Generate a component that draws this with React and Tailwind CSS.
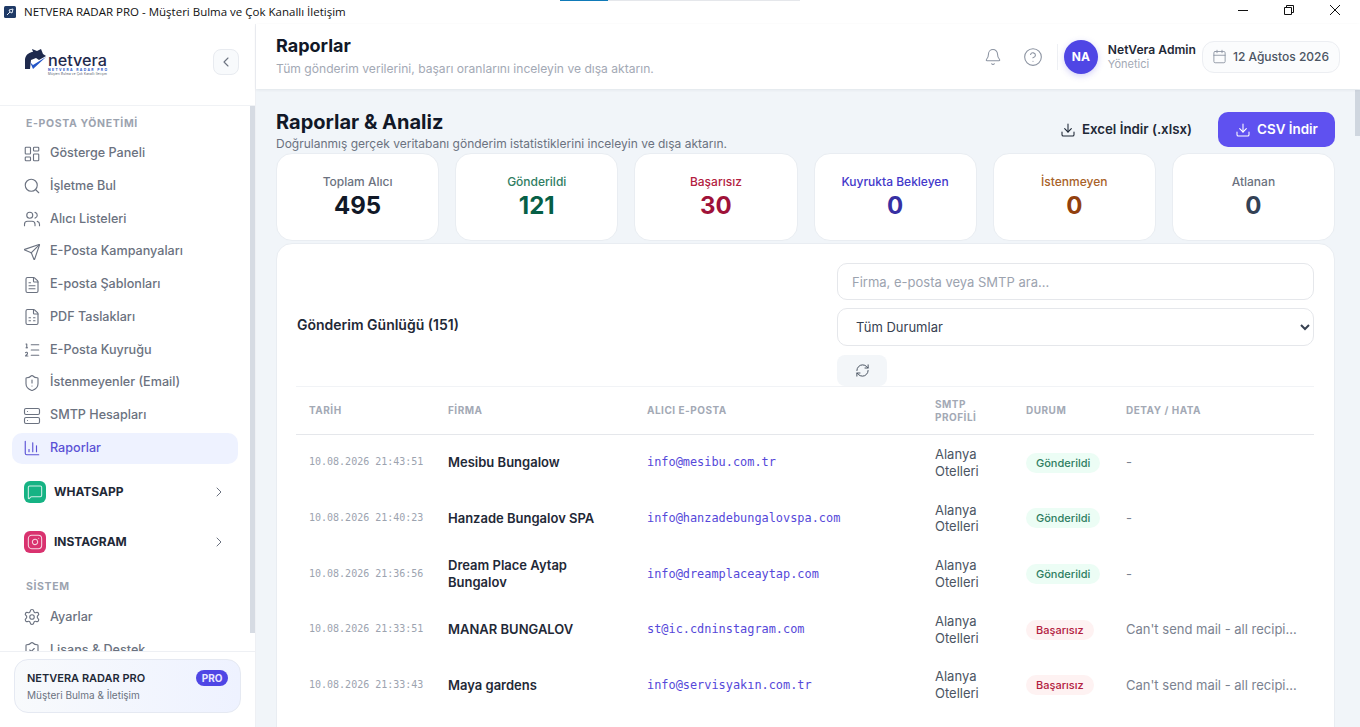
import React from 'react';
import { LayoutDashboard, Search, Users, Send, FileText, FileSpreadsheet, ListOrdered, ShieldAlert, Server, ChartColumn, MessageSquare, Instagram, ChevronRight, ChevronLeft, Settings, ShieldCheck, Bell, CircleHelp, Calendar, Download, RefreshCw } from 'lucide-react';

const nav = [
  [LayoutDashboard, 'Gösterge Paneli'],
  [Search, 'İşletme Bul'],
  [Users, 'Alıcı Listeleri'],
  [Send, 'E-Posta Kampanyaları'],
  [FileText, 'E-posta Şablonları'],
  [FileSpreadsheet, 'PDF Taslakları'],
  [ListOrdered, 'E-Posta Kuyruğu'],
  [ShieldAlert, 'İstenmeyenler (Email)'],
  [Server, 'SMTP Hesapları'],
];

const stats = [
  ['Toplam Alıcı', '495', 'text-[#6b7280]', 'text-[#111827]'],
  ['Gönderildi', '121', 'text-[#2f7d62]', 'text-[#065f46]'],
  ['Başarısız', '30', 'text-[#b3213f]', 'text-[#9f1239]'],
  ['Kuyrukta Bekleyen', '0', 'text-[#4338ca]', 'text-[#3730a3]'],
  ['İstenmeyen', '0', 'text-[#a8622a]', 'text-[#92400e]'],
  ['Atlanan', '0', 'text-[#6b7280]', 'text-[#334155]'],
];

const err = "Can't send mail - all recipi...";
const rows = [
  ['10.08.2026 21:43:51', 'Mesibu Bungalow', 'info@mesibu.com.tr', true, '-'],
  ['10.08.2026 21:40:23', 'Hanzade Bungalov SPA', 'info@hanzadebungalovspa.com', true, '-'],
  ['10.08.2026 21:36:56', 'Dream Place Aytap Bungalov', 'info@dreamplaceaytap.com', true, '-'],
  ['10.08.2026 21:33:51', 'MANAR BUNGALOV', 'st@ic.cdninstagram.com', false, err],
  ['10.08.2026 21:33:43', 'Maya gardens', 'info@servisyakın.com.tr', false, err],
];

function NavItem({ icon: Icon, label, active }) {
  return (
    <div className={`flex h-[31px] items-center gap-[9px] rounded-[10px] pl-[11px] text-[12.6px] font-medium ${active ? 'bg-[#eef2ff] text-[#5b52d6]' : 'text-[#6b7280]'}`}>
      <Icon size={18} strokeWidth={1.5} />
      <span>{label}</span>
    </div>
  );
}

function Group({ icon: Icon, label, bg }) {
  return (
    <div className="flex h-[22px] items-center pl-[12px] pr-[11px]">
      <div className={`flex h-[22px] w-[22px] items-center justify-center rounded-[6px] ${bg}`}>
        <Icon size={16} strokeWidth={1.6} className="text-white opacity-80" />
      </div>
      <span className="ml-2 flex-1 text-[12px] font-bold text-[#1f2937]">{label}</span>
      <ChevronRight size={16} strokeWidth={1.5} className="text-[#6b7280]" />
    </div>
  );
}

function Logo() {
  return (
    <svg width="84" height="28" viewBox="0 0 84 28" className="shrink-0">
      <path d="M1 21 L1 11 C2 6 6 4 9 4 L8 1 L13 3 L17 1 L19 6 L22 8 L15 12 L12 10 L7 12 L6 21 Z" fill="#1f2a4d" />
      <path d="M6 14 L9 21 L22 9 L9 17 Z" fill="#2456c8" />
      <text x="24" y="18" fontFamily="Inter, sans-serif" fontSize="15.5" fontWeight="500" fill="#1f2a4d" textLength="59" lengthAdjust="spacingAndGlyphs">netvera</text>
      <text x="24" y="22.5" fontFamily="Inter, sans-serif" fontSize="3.4" fontWeight="700" fill="#2456c8" textLength="59">NETVERA RADAR PRO</text>
      <text x="24" y="27" fontFamily="Inter, sans-serif" fontSize="3" fill="#4b5563" textLength="59">Müşteri Bulma ve Çok Kanallı İletişim</text>
    </svg>
  );
}

function Sidebar() {
  return (
    <aside className="relative flex w-[256px] shrink-0 flex-col border-r border-[#eef0f4] bg-white">
      <div className="flex h-[82px] shrink-0 items-center justify-between border-b border-[#f0f2f5] pb-[5px] pl-[24px] pr-[16px]">
        <Logo />
        <button className="flex h-[26px] w-[26px] items-center justify-center rounded-[8px] border border-[#e8ebf0] bg-[#f8fafc] text-[#6b7280]">
          <ChevronLeft size={16} strokeWidth={1.6} />
        </button>
      </div>
      <div className="h-[546px] shrink-0 overflow-hidden border-b border-[#eef0f4] pl-[12px] pr-[17px]">
        <div className="pl-[14px] pt-[11px] text-[10.5px] font-bold leading-[13px] tracking-[0.06em] text-[#9ca3af]">E-POSTA YÖNETİMİ</div>
        <div className="mt-[8px] flex flex-col gap-[1.75px]">
          {nav.map(([icon, label]) => <NavItem key={label} icon={icon} label={label} />)}
          <NavItem icon={ChartColumn} label="Raporlar" active />
        </div>
        <div className="mt-[17.5px] flex flex-col gap-[28px]">
          <Group icon={MessageSquare} label="WHATSAPP" bg="bg-[#16b384]" />
          <Group icon={Instagram} label="INSTAGRAM" bg="bg-[#d9326f]" />
        </div>
        <div className="pl-[14px] pt-[26.5px] text-[10.5px] font-bold leading-[13px] tracking-[0.06em] text-[#9ca3af]">SİSTEM</div>
        <div className="mt-[9px] flex flex-col gap-[1.75px]">
          <NavItem icon={Settings} label="Ayarlar" />
          <NavItem icon={ShieldCheck} label="Lisans & Destek" />
        </div>
      </div>
      <div className="px-[14px] pt-[7px]">
        <div className="flex h-[54px] flex-col justify-center gap-[2px] rounded-[14px] border border-[#e5e9f2] bg-gradient-to-r from-[#f8fafc] to-[#eef2ff] pl-[12px] pr-[12px]">
          <div className="flex items-center justify-between">
            <span className="text-[11px] font-semibold text-[#1f2937]">NETVERA RADAR PRO</span>
            <span className="rounded-full bg-[#4f46e5] px-[5.5px] text-[10px] font-bold leading-[16px] text-[#e9e8ff]">PRO</span>
          </div>
          <span className="text-[10px] leading-[14px] text-[#6b7280]">Müşteri Bulma & İletişim</span>
        </div>
      </div>
      <div className="absolute left-[250px] top-[82px] h-[527px] w-[5px] bg-[#d6dbe3]" />
    </aside>
  );
}

function Header() {
  return (
    <header className="z-10 flex h-[65px] shrink-0 items-center justify-between bg-white pl-[20px] pr-[20px] shadow-[0_1px_3px_rgba(15,23,42,0.07)]">
      <div className="pb-[1px]">
        <h1 className="text-[18px] font-bold leading-[22px] text-[#111827]">Raporlar</h1>
        <p className="mt-[4px] text-[12.1px] leading-[16px] text-[#a3a9b5]">Tüm gönderim verilerini, başarı oranlarını inceleyin ve dışa aktarın.</p>
      </div>
      <div className="flex items-center">
        <Bell size={18} strokeWidth={1.4} className="text-[#8b93a1]" />
        <CircleHelp size={20} strokeWidth={1.3} className="ml-[21px] text-[#8b93a1]" />
        <div className="ml-[14px] h-[26px] w-px bg-[#eef0f4]" />
        <div className="ml-[6px] flex h-[34px] w-[34px] items-center justify-center rounded-full bg-[#4f46e5] text-[12px] font-bold text-white shadow-[0_2px_6px_rgba(79,70,229,0.25)]">NA</div>
        <div className="ml-[10px] flex flex-col">
          <span className="text-[12.1px] font-semibold leading-[15px] text-[#1f2937]">NetVera Admin</span>
          <span className="text-[11px] leading-[15px] text-[#a3a9b5]">Yönetici</span>
        </div>
        <div className="ml-[6px] flex h-[32px] items-center gap-[6px] rounded-[12px] border border-[#eceef2] bg-[#fbfcfd] pl-[9px] pr-[10px] text-[12px] font-medium text-[#4b5563]">
          <Calendar size={15} strokeWidth={1.4} className="text-[#8b93a1]" />
          <span>12 Ağustos 2026</span>
        </div>
      </div>
    </header>
  );
}

function Stat({ s }) {
  return (
    <div className="flex h-[88px] flex-col items-center rounded-[16px] border border-[#e9edf2] bg-white pt-[19.5px]">
      <span className={`text-[12px] font-medium leading-[15px] ${s[2]}`}>{s[0]}</span>
      <span className={`mt-[2px] text-[24px] font-bold leading-[30px] ${s[3]}`}>{s[1]}</span>
    </div>
  );
}

function Badge({ ok }) {
  return ok
    ? <span className="inline-block rounded-full bg-[#ecfdf5] px-[10px] text-[11px] font-medium leading-[20px] text-[#2f7d62]">Gönderildi</span>
    : <span className="inline-block rounded-full bg-[#fef2f2] px-[10px] text-[11px] font-medium leading-[20px] text-[#b3213f]">Başarısız</span>;
}

const th = 'border-b border-[#e5e7eb] px-[13px] text-left align-middle text-[10px] font-bold uppercase leading-[13px] tracking-[0.05em] text-[#a3a9b5]';
const td = 'px-[13px] py-[11px] align-middle';

function LogTable() {
  return (
    <section className="mt-[2px] rounded-[16px] border border-[#e9edf2] bg-white pl-[19px] pr-[20px] pt-[19px]">
      <div className="flex items-center justify-between pl-px">
        <h2 className="text-[14px] font-semibold text-[#1f2937]">Gönderim Günlüğü (151)</h2>
        <div className="flex w-[477px] flex-col">
          <input readOnly placeholder="Firma, e-posta veya SMTP ara..." className="h-[37px] rounded-[10px] border border-[#e5e7eb] bg-white px-[14px] text-[13px] outline-none placeholder:text-[#9ca3af]" />
          <select className="mt-[8px] h-[38px] rounded-[10px] border border-[#e5e7eb] bg-white px-[14px] text-[13px] text-[#374151] outline-none">
            <option>Tüm Durumlar</option>
          </select>
          <button className="mt-[9px] flex h-[31px] w-[50px] items-center justify-center rounded-[8px] bg-[#f3f6f9] text-[#4b5563]">
            <RefreshCw size={15} strokeWidth={1.6} />
          </button>
        </div>
      </div>
      <table className="w-full table-fixed border-t border-[#f1f3f6]">
        <colgroup>
          <col className="w-[139px]" /><col className="w-[199px]" /><col className="w-[288px]" /><col className="w-[91px]" /><col className="w-[100px]" /><col />
        </colgroup>
        <thead>
          <tr className="h-[48px]">
            <th className={th}>TARİH</th>
            <th className={th}>FİRMA</th>
            <th className={th}>ALICI E-POSTA</th>
            <th className={th}>SMTP PROFİLİ</th>
            <th className={th}>DURUM</th>
            <th className={th}>DETAY / HATA</th>
          </tr>
        </thead>
        <tbody className="leading-[16.8px]">
          {rows.map((r) => (
            <tr key={r[0]}>
              <td className={`${td} whitespace-nowrap font-['DejaVu_Sans_Mono',monospace] text-[10px] text-[#9ca3af]`}>{r[0]}</td>
              <td className={`${td} text-[13px] font-semibold text-[#1f2937]`}>{r[1]}</td>
              <td className={`${td} whitespace-nowrap font-['DejaVu_Sans_Mono',monospace] text-[11.9px] text-[#5548d9]`}>{r[2]}</td>
              <td className={`${td} text-[13px] text-[#4b5563]`}>Alanya Otelleri</td>
              <td className={td}><Badge ok={r[3]} /></td>
              <td className={`${td} whitespace-nowrap text-[13px] text-[#7b8290]`}>{r[4]}</td>
            </tr>
          ))}
          <tr>
            <td className={td} /><td className={td} /><td className={td} />
            <td className={`${td} text-[13px] text-[#4b5563]`}>Alanya Otelleri</td>
            <td className={td} /><td className={td} />
          </tr>
        </tbody>
      </table>
    </section>
  );
}

function Main() {
  return (
    <main className="relative flex min-w-0 flex-1 flex-col">
      <Header />
      <div className="min-h-0 flex-1 overflow-hidden bg-[#f1f5f9] pl-[20px] pr-[25px] pt-[23px]">
        <div className="flex items-start justify-between">
          <div className="-mt-[1px]">
            <h2 className="text-[20px] font-bold leading-[22px] text-[#111827]">Raporlar & Analiz</h2>
            <p className="mt-[3px] text-[12px] leading-[16px] text-[#6b7280]">Doğrulanmış gerçek veritabanı gönderim istatistiklerini inceleyin ve dışa aktarın.</p>
          </div>
          <div className="flex items-center">
            <button className="flex items-center gap-[6px] text-[13.3px] font-semibold text-[#1f2937]">
              <Download size={16} strokeWidth={1.6} />Excel İndir (.xlsx)
            </button>
            <button className="ml-[26px] flex h-[35px] w-[117px] items-center justify-center gap-[6px] rounded-[10px] bg-[#5f51f0] text-[13.4px] font-semibold text-white">
              <Download size={16} strokeWidth={1.6} />CSV İndir
            </button>
          </div>
        </div>
        <div className="mt-[1px] grid grid-cols-6 gap-[16px]">
          {stats.map((s) => <Stat key={s[0]} s={s} />)}
        </div>
        <LogTable />
      </div>
      <div className="absolute right-0 top-[66px] h-[46px] w-[5px] bg-[#cfd6df]" />
    </main>
  );
}

function TitleBar() {
  return (
    <div className="relative flex h-[24px] shrink-0 items-center bg-white pl-[4px]">
      <svg width="12" height="12" viewBox="0 0 12 12">
        <rect width="12" height="12" rx="1.5" fill="#1f3a66" />
        <path d="M3 9 L6 6 L5 4 L9 3 L8 7 L6 6" stroke="#e5edf7" strokeWidth="1" fill="none" />
      </svg>
      <span className="ml-[8px] font-['Open_Sans',sans-serif] text-[11.5px] text-[#111]">NETVERA RADAR PRO - Müşteri Bulma ve Çok Kanallı İletişim</span>
      <div className="absolute left-[560px] top-0 flex h-px">
        <div className="w-[48px] bg-[#0f7ab8]" />
        <div className="w-[192px] bg-[#e5e7eb]" />
      </div>
      <div className="absolute right-[19px] top-[4px] flex gap-[34px]">
        <svg width="12" height="12" viewBox="0 0 12 12"><path d="M1 6.5 H11" stroke="#111" fill="none" /></svg>
        <svg width="12" height="12" viewBox="0 0 12 12"><path d="M1.5 3.5 H8.5 V10.5 H1.5 Z M3.5 3.5 V1.5 H10.5 V8.5 H8.5" stroke="#111" fill="none" /></svg>
        <svg width="12" height="12" viewBox="0 0 12 12"><path d="M1 1 L11 11 M11 1 L1 11" stroke="#111" fill="none" /></svg>
      </div>
    </div>
  );
}

export default function App() {
  return (
    <div className="flex h-screen w-full flex-col overflow-hidden bg-white font-['Inter',sans-serif]">
      <TitleBar />
      <div className="flex min-h-0 flex-1">
        <Sidebar />
        <Main />
      </div>
    </div>
  );
}
